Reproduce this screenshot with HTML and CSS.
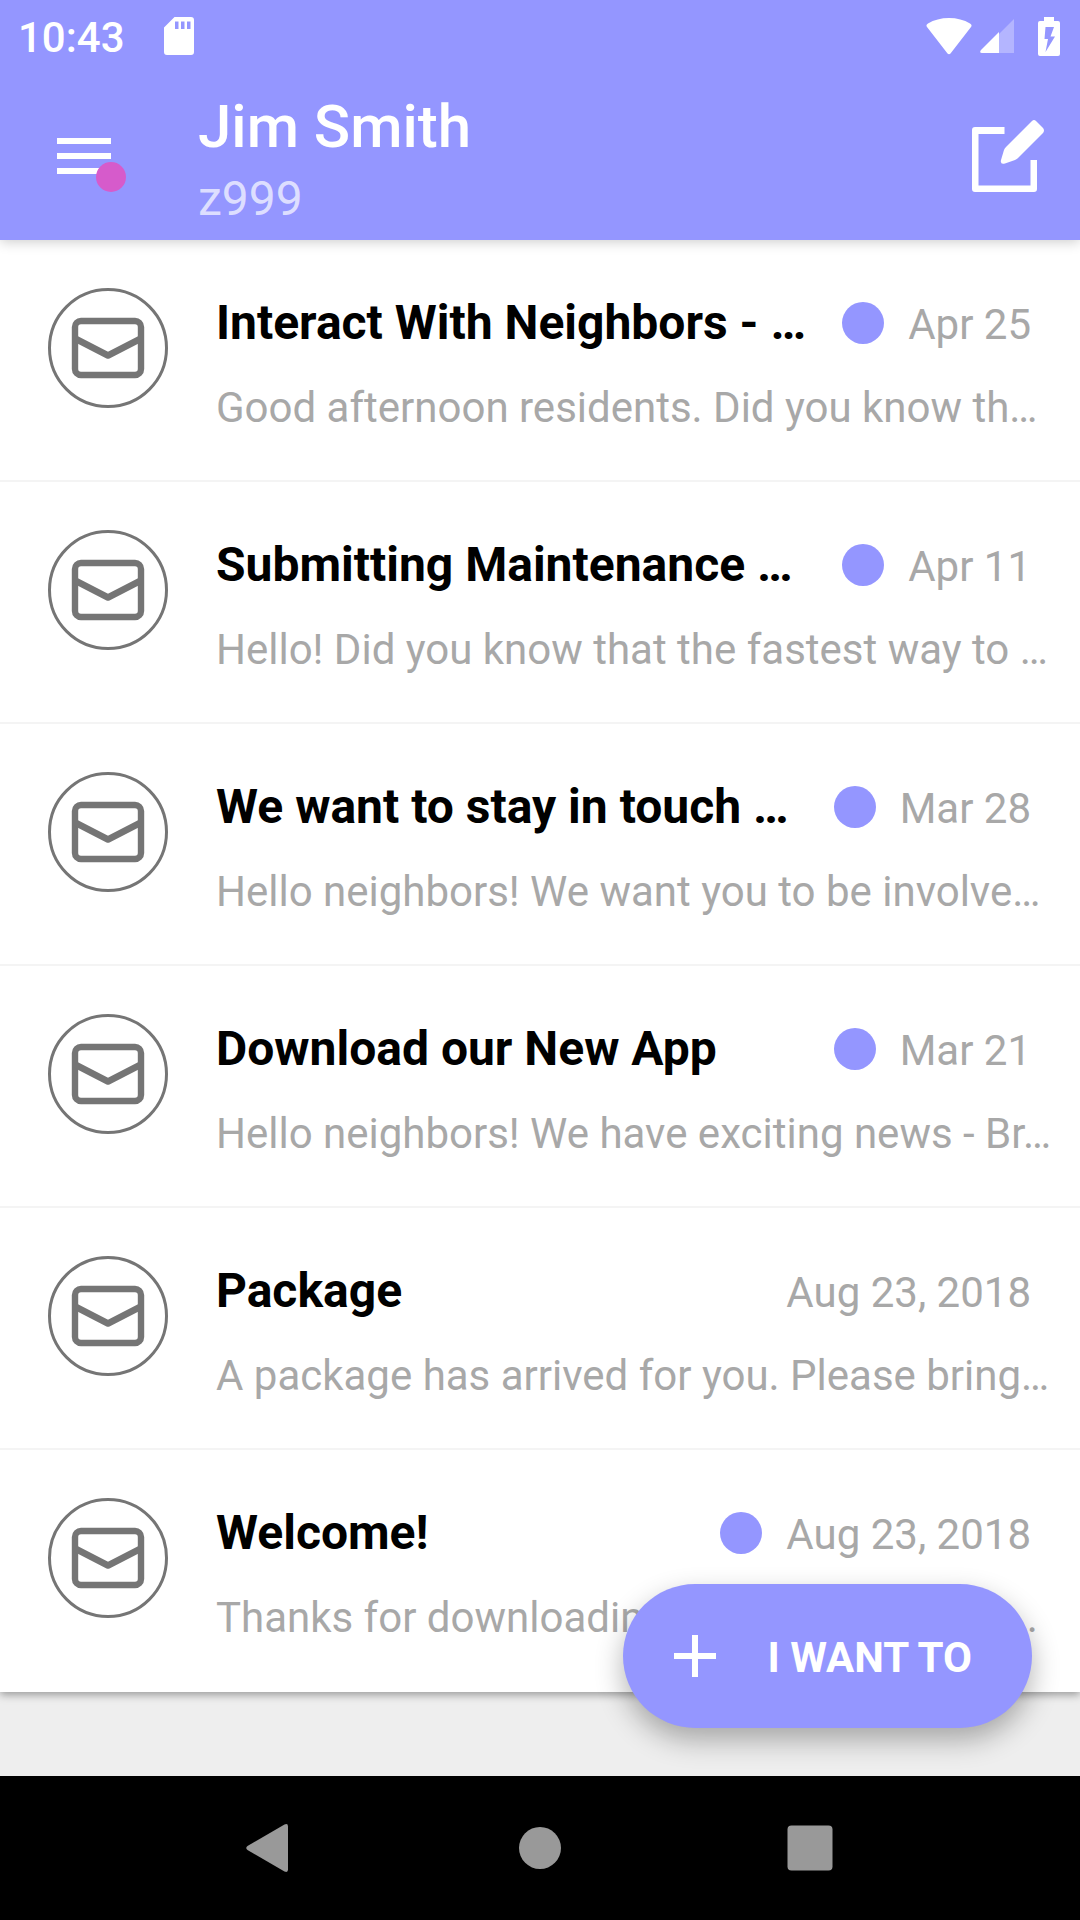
FILE: index.html
```html
<!DOCTYPE html>
<html lang="en">
<head>
<meta charset="utf-8">
<meta name="viewport" content="width=device-width, initial-scale=1">
<title>Messages</title>
<link rel="stylesheet" href="styles.css">
</head>
<body>
<svg class="sprite" aria-hidden="true">
  <symbol id="mail" viewBox="0 0 120 120">
    <circle cx="60" cy="60" r="58.5" fill="none" stroke="#757575" stroke-width="3"/>
    <rect x="27" y="33" width="66" height="54" rx="6" fill="none" stroke="#757575" stroke-width="6.4"/>
    <path d="M28 51 60 67.5 92 51" fill="none" stroke="#757575" stroke-width="6.6" stroke-linejoin="round"/>
  </symbol>
</svg>
<header class="top">
  <div class="status">
    <span class="clock">10:43</span>
    <svg class="sd" viewBox="0 0 32 38" aria-hidden="true"><path fill="#fff" fill-rule="evenodd" d="M11.500 0H28Q31 0 31 3V35Q31 38 28 38H4Q1 38 1 35V10.500ZM12 4.500V12H15.500V4.500ZM18 4.500V12H21.500V4.500ZM24 4.500V12H27.500V4.500Z"/></svg>
    <svg class="wifi" viewBox="0 0 46 37" aria-hidden="true"><path fill="#fff" d="M1 9Q-.5 7 2 5.500Q11 0 23 0T44 5.500Q46.500 7 45 9L24.500 35.500Q23 37 21.500 35.500Z"/></svg>
    <svg class="signal" viewBox="0 0 34 34" aria-hidden="true"><path fill="#fff" fill-opacity=".3" d="M34 0V34H19V15Z"/><path fill="#fff" d="M19 13V34H2Q-1 34 1 31Z"/></svg>
    <svg class="battery" viewBox="0 0 22 39" aria-hidden="true"><path fill="#fff" fill-rule="evenodd" d="M6 0H16V4H20Q22 4 22 6V37Q22 39 20 39H2Q0 39 0 37V6Q0 4 2 4H6ZM7.500 10 6.500 22H10L7.500 35 17 19.500H12.500L16 10Z"/></svg>
  </div>
  <div class="toolbar">
    <button class="menu" type="button" aria-label="Open menu">
      <svg viewBox="0 0 54 36" aria-hidden="true"><path fill="#fff" d="M0 0H54V6H0ZM0 15H54V21H0ZM0 30H54V36H0Z"/></svg>
      <span class="badge"></span>
    </button>
    <div class="who">
      <h1 class="name">Jim Smith</h1>
      <p class="unit">z999</p>
    </div>
    <button class="compose" type="button" aria-label="Compose">
      <svg viewBox="0 0 72 72" aria-hidden="true"><path fill="#fff" d="M3 7H32.500V14H6.500V65.500H58.500V40H65V69Q65 72 62 72H3Q0 72 0 69V10Q0 7 3 7Z"/><path fill="#fff" d="M60 1Q62 -1 64 1L71 8Q73 10.500 71 13L46 38Q45 39 43 40L33 43.500Q28 45 29 40L32 30Q32.500 28.500 34 27Z"/></svg>
    </button>
  </div>
</header>
<main class="inbox">
  <ul class="list">
    <li><a class="row" href="#m1"><svg class="icon" aria-hidden="true"><use href="#mail"/></svg>
      <div class="body"><div class="line"><h2 class="title">Interact With Neighbors - …</h2><span class="dot"></span><time class="date">Apr 25</time></div>
      <p class="preview">Good afternoon residents. Did you know th…</p></div></a></li>
    <li><a class="row" href="#m2"><svg class="icon" aria-hidden="true"><use href="#mail"/></svg>
      <div class="body"><div class="line"><h2 class="title">Submitting Maintenance …</h2><span class="dot"></span><time class="date">Apr 11</time></div>
      <p class="preview">Hello! Did you know that the fastest way to …</p></div></a></li>
    <li><a class="row" href="#m3"><svg class="icon" aria-hidden="true"><use href="#mail"/></svg>
      <div class="body"><div class="line"><h2 class="title">We want to stay in touch …</h2><span class="dot"></span><time class="date">Mar 28</time></div>
      <p class="preview">Hello neighbors! We want you to be involve…</p></div></a></li>
    <li><a class="row" href="#m4"><svg class="icon" aria-hidden="true"><use href="#mail"/></svg>
      <div class="body"><div class="line"><h2 class="title">Download our New App</h2><span class="dot"></span><time class="date">Mar 21</time></div>
      <p class="preview">Hello neighbors! We have exciting news - Br…</p></div></a></li>
    <li><a class="row" href="#m5"><svg class="icon" aria-hidden="true"><use href="#mail"/></svg>
      <div class="body"><div class="line"><h2 class="title">Package</h2><time class="date">Aug 23, 2018</time></div>
      <p class="preview">A package has arrived for you. Please bring…</p></div></a></li>
    <li><a class="row" href="#m6"><svg class="icon" aria-hidden="true"><use href="#mail"/></svg>
      <div class="body"><div class="line"><h2 class="title">Welcome!</h2><span class="dot"></span><time class="date">Aug 23, 2018</time></div>
      <p class="preview">Thanks for downloading our new app! You …</p></div></a></li>
  </ul>
  <button class="fab" type="button">
    <svg class="plus" viewBox="0 0 42 42" aria-hidden="true"><path fill="#fff" d="M18 0H24V18H42V24H24V42H18V24H0V18H18Z"/></svg>
    <span class="label">I WANT TO</span>
  </button>
</main>
<nav class="sysnav" aria-label="System">
  <button type="button" aria-label="Back"><svg viewBox="0 0 48 48" aria-hidden="true"><path fill="#999" d="M42 2.500V45.500Q42 49 38.500 47.500L1.500 26Q-1 24 1.500 22L38.500 .5Q42 -1 42 2.500Z"/></svg></button>
  <button type="button" aria-label="Home"><svg viewBox="0 0 48 48" aria-hidden="true"><circle cx="24" cy="24" r="21" fill="#999"/></svg></button>
  <button type="button" aria-label="Recent apps"><svg viewBox="0 0 48 48" aria-hidden="true"><rect x="1.500" y="1.500" width="45" height="45" rx="4" fill="#999"/></svg></button>
</nav>
</body>
</html>
```

FILE: styles.css
```css
* {
  box-sizing: border-box;
  margin: 0;
  padding: 0;
}

body {
  display: flex;
  flex-direction: column;
  min-height: 100vh;
  background: #eee;
  color: #000;
  font-family: Roboto, "Liberation Sans", sans-serif;
}

button {
  border: 0;
  background: none;
  color: inherit;
  font: inherit;
  cursor: pointer;
}

svg {
  display: block;
  flex: none;
}

.sprite {
  position: absolute;
  width: 0;
  height: 0;
}

.top {
  position: relative;
  z-index: 1;
  background: #9496ff;
  color: #fff;
  box-shadow: 0 2px 12px rgba(0, 0, 0, 0.2);
}

.status {
  display: flex;
  align-items: center;
  height: 72px;
  padding: 0 20px 0 18px;
}

.clock {
  padding-top: 4px;
  font-size: 42px;
  font-weight: 500;
  line-height: 50px;
}

.sd {
  width: 32px;
  height: 38px;
  margin-left: 38px;
}

.wifi {
  width: 46px;
  height: 37px;
  margin-left: auto;
}

.signal {
  width: 34px;
  height: 34px;
  margin-left: 8px;
}

.battery {
  width: 22px;
  height: 39px;
  margin-left: 24px;
}

.toolbar {
  display: flex;
  align-items: center;
  height: 168px;
  padding: 0 36px 0 57px;
}

.menu {
  position: relative;
  width: 54px;
  height: 36px;
}

.menu svg {
  width: 54px;
  height: 36px;
}

.badge {
  position: absolute;
  right: -15px;
  bottom: -18px;
  width: 30px;
  height: 30px;
  border-radius: 50%;
  background: #d65bcb;
}

.who {
  flex: 1;
  margin-left: 87px;
  padding-top: 14px;
}

.name {
  font-size: 60px;
  font-weight: 500;
  line-height: 72px;
}

.unit {
  color: rgba(255, 255, 255, 0.7);
  font-size: 48px;
  line-height: 72px;
}

.compose svg {
  width: 72px;
  height: 72px;
}

.inbox {
  position: relative;
  flex: 1;
  padding-bottom: 84px;
}

.list {
  background: #fff;
  list-style: none;
  box-shadow: 0 3px 8px rgba(0, 0, 0, 0.35);
}

.row {
  display: flex;
  gap: 48px;
  height: 242px;
  padding: 48px 24px 0 48px;
  border-bottom: 2px solid #f4f4f4;
  color: inherit;
  text-decoration: none;
}

.list li:last-child .row {
  border-bottom-color: transparent;
}

.icon {
  width: 120px;
  height: 120px;
}

.body {
  flex: 1;
  min-width: 0;
  padding-top: 7px;
}

.line {
  display: flex;
  align-items: baseline;
  gap: 24px;
  padding-right: 25px;
}

.title {
  flex: 1;
  min-width: 0;
  overflow: hidden;
  font-size: 48px;
  font-weight: 700;
  line-height: 56px;
  white-space: nowrap;
}

.dot {
  align-self: center;
  width: 42px;
  height: 42px;
  border-radius: 50%;
  background: #9496ff;
}

.date,
.preview {
  color: #a8a8a8;
  font-size: 42px;
  line-height: 50px;
  white-space: nowrap;
}

.preview {
  margin-top: 32px;
  overflow: hidden;
}

.fab {
  position: absolute;
  right: 48px;
  bottom: 48px;
  display: flex;
  align-items: center;
  gap: 51px;
  height: 144px;
  padding: 0 60px 0 51px;
  border-radius: 72px;
  background: #9496ff;
  color: #fff;
  font-size: 42px;
  font-weight: 700;
  line-height: 50px;
  white-space: nowrap;
  box-shadow: 0 12px 28px rgba(0, 0, 0, 0.3);
}

.label {
  padding-top: 4px;
}

.plus {
  width: 42px;
  height: 42px;
}

.sysnav {
  display: grid;
  grid-template-columns: repeat(3, 1fr);
  height: 144px;
  padding: 0 12.5%;
  background: #000;
}

.sysnav button {
  display: grid;
  place-items: center;
}

.sysnav svg {
  width: 48px;
  height: 48px;
}
```
